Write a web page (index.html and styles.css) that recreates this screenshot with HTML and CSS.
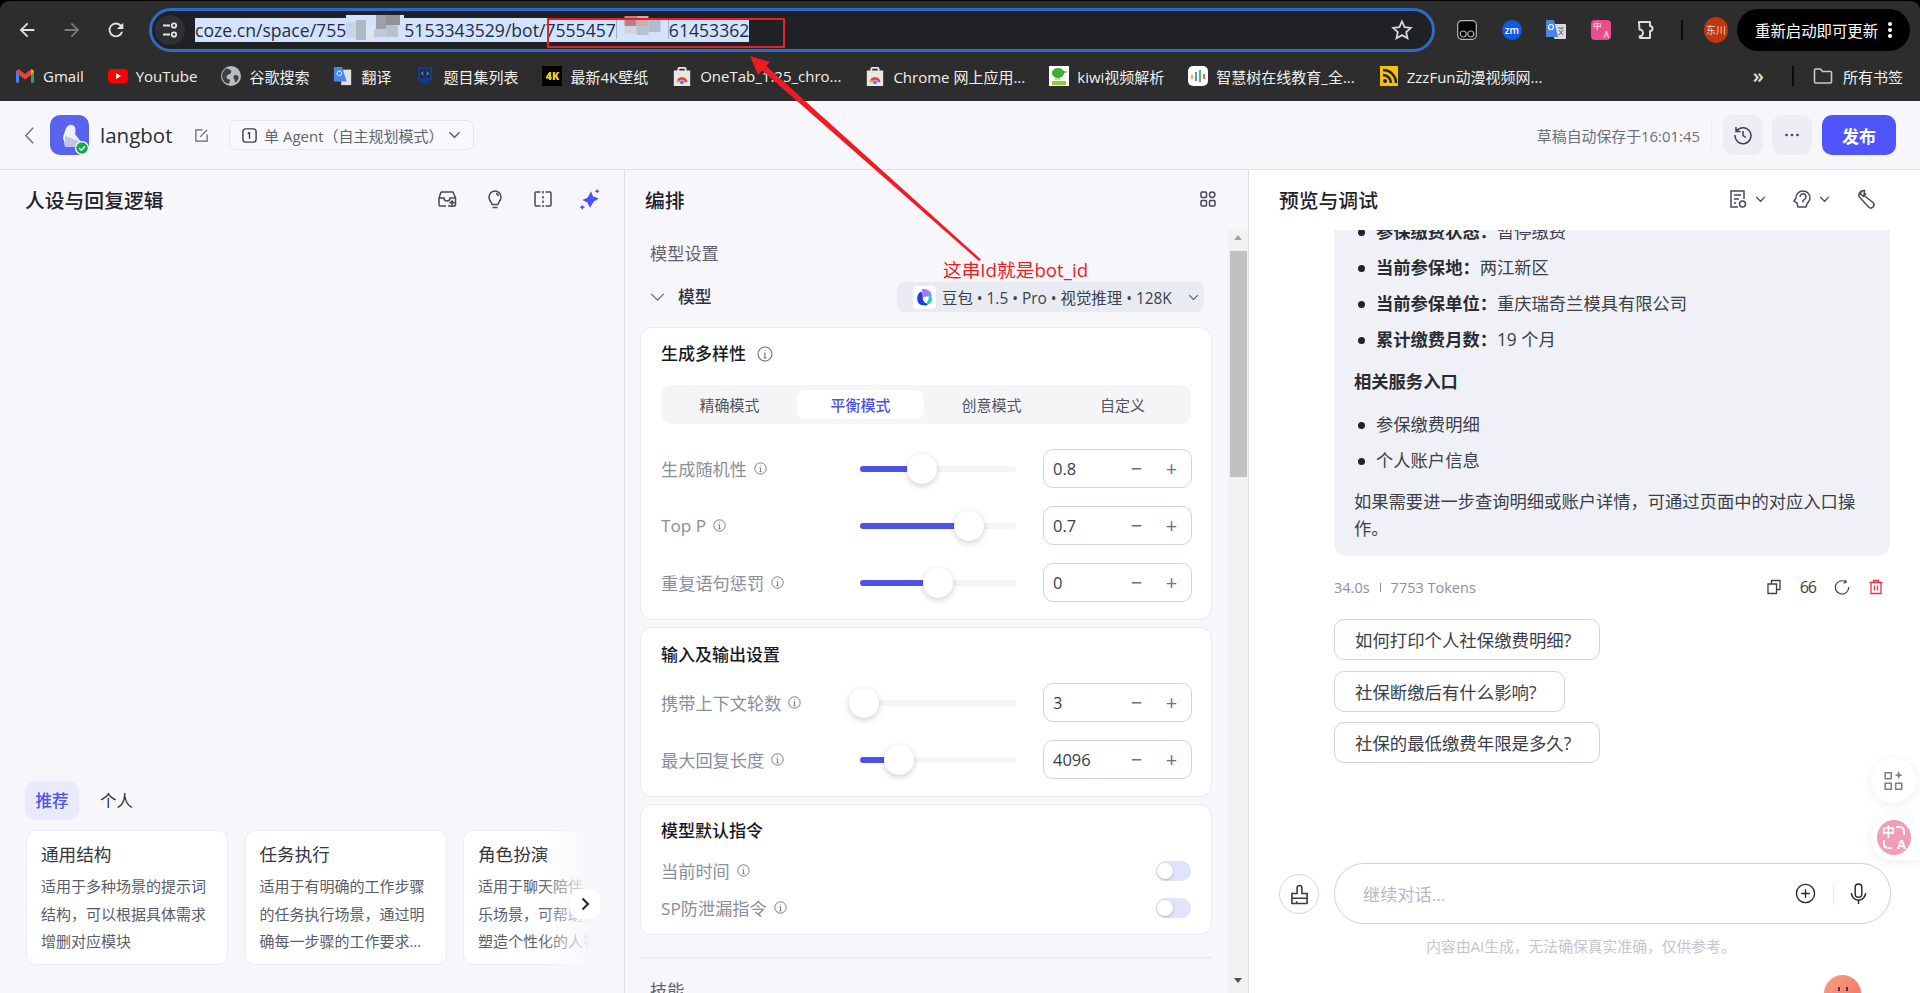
FILE: index.html
```html
<!DOCTYPE html>
<html lang="zh-CN">
<head>
<meta charset="utf-8">
<title>langbot</title>
<link rel="stylesheet" href="styles.css">
</head>
<body>
<div class="page">
  <header class="browser">
    <div class="toolbar">
      <div class="nav">
        <svg class="nav-icon" viewBox="0 0 24 24"><path d="M20 11H7.8l5.6-5.6L12 4l-8 8 8 8 1.4-1.4L7.8 13H20z"/></svg>
        <svg class="nav-icon off" viewBox="0 0 24 24"><path d="M4 11h12.2l-5.6-5.6L12 4l8 8-8 8-1.4-1.4 5.6-5.6H4z"/></svg>
        <svg class="nav-icon" viewBox="0 0 24 24"><path d="M17.7 6.3A8 8 0 1 0 19.7 14h-2.1a6 6 0 1 1-1.3-6.3L13 11h7V4z"/></svg>
      </div>
      <div class="omnibox">
        <span class="site-info"><svg viewBox="0 0 20 20"><path d="M3 5.5h7M3 14.5h7" class="tune"/><circle cx="14" cy="5.5" r="2.2" class="tune"/><circle cx="14" cy="14.5" r="2.2" class="tune"/></svg></span>
        <span class="url">coze.cn/space/755<span class="mosaic m1"><svg viewBox="0 0 58 27"><rect width="58" height="27" fill="#d3e3fd"/><rect x="0" y="7" width="10" height="16" fill="#c9d5e6"/><rect x="10" y="5" width="10" height="20" fill="#aeb8c6"/><rect x="20" y="10" width="8" height="17" fill="#dfe5ef"/><rect x="30" y="0" width="10" height="14" fill="#9da2a9"/><rect x="40" y="0" width="14" height="10" fill="#8f9297"/><rect x="28" y="14" width="12" height="8" fill="#c2cad6"/><rect x="40" y="10" width="12" height="12" fill="#b8c1ce"/></svg></span>5153343529/bot/7555457<span class="mosaic m2"><svg viewBox="0 0 52 24"><rect width="52" height="24" fill="#202124"/><rect y="4" width="52" height="20" fill="#d3e3fd"/><rect x="8" y="1" width="12" height="10" fill="#bb7f88"/><rect x="20" y="1" width="12" height="10" fill="#d8a8ae"/><rect x="32" y="3" width="12" height="14" fill="#aebccd"/><rect x="8" y="11" width="12" height="8" fill="#cfd6e2"/><rect x="20" y="11" width="12" height="9" fill="#b7c1cf"/></svg></span>61453362</span>
        <svg class="star" viewBox="0 0 24 24"><path d="M12 3.5l2.6 5.7 6.2.7-4.6 4.2 1.3 6.1L12 17.1l-5.5 3.1 1.3-6.1-4.6-4.2 6.2-.7z"/></svg>
      </div>
      <div class="extensions">
        <svg class="ext" viewBox="0 0 20 20"><rect x=".7" y=".7" width="18.6" height="18.6" rx="4" fill="#050505" stroke="#b9b9b9" stroke-width="1.2"/><circle cx="6.2" cy="14" r="3" fill="none" stroke="#aaa" stroke-width="1.2"/><circle cx="13.8" cy="14" r="3" fill="none" stroke="#aaa" stroke-width="1.2"/></svg>
        <span class="ext-zm">zm</span>
        <svg class="ext wide" viewBox="0 0 22 22"><rect x="9" y="5" width="12" height="15" rx="1" fill="#d9dde0"/><path d="M13 9h6M16 9v1.500M14 16l4-5M14 11l4 5" stroke="#666" fill="none"/><path d="M1 2a1 1 0 0 1 1-1h7l4 17H2a1 1 0 0 1-1-1z" fill="#4a86e8"/><circle cx="6" cy="8" r="2.500" fill="none" stroke="#fff" stroke-width="1.200"/></svg>
        <span class="ext-tr"><i>中</i><i>A</i></span>
        <svg class="ext" viewBox="0 0 20 20"><path d="M3 2h11v4a2 2 0 0 1 0 5v7H4l-.5-1.500a3 3 0 0 0 0-7z" fill="none" stroke="#dcdcdc" stroke-width="2" stroke-linejoin="round"/></svg>
        <span class="tool-sep"></span>
        <span class="avatar">东川</span>
      </div>
      <div class="update">重新启动即可更新<span class="dots"></span></div>
    </div>
    <nav class="bookmarks">
      <a class="bm b1"><svg viewBox="0 0 20 16"><path d="M1 3v11.500h3V7l6 4.500L16 7v7.500h3V3L16.500 1 10 6 3.500 1z" fill="#ea4335"/><path d="M1 3v11.500h3V7z" fill="#4285f4"/><path d="M16 7v7.500h3V3z" fill="#34a853"/><path d="M19 3l-2.500-2L16 7z" fill="#fbbc04"/></svg>Gmail</a>
      <a class="bm b2"><svg viewBox="0 0 20 14"><rect width="20" height="14" rx="3.500" fill="#f00"/><path d="M8 4l5 3-5 3z" fill="#fff"/></svg>YouTube</a>
      <a class="bm b3"><svg viewBox="0 0 18 18"><circle cx="9" cy="9" r="9" fill="#b9bcc0"/><path d="M5 2c3 1 5 2 4 4s-4 1-4 4 3 1 3 3-1 3-2 3c-3-1-5-4-5-7s2-6 4-7zM13 8c2 0 3 1 3 2s-1 4-3 5c-1-1 0-2-1-3s-1-4 1-4z" fill="#3c3f43"/></svg>谷歌搜索</a>
      <a class="bm b4"><svg viewBox="0 0 20 22"><rect x="8" y="4" width="11" height="17" fill="#dfe1e4"/><path d="M0 1h9l5 16H0z" fill="#4a86e8"/><circle cx="6" cy="8" r="2.500" fill="none" stroke="#fff"/></svg>翻译</a>
      <a class="bm b5"><svg viewBox="0 0 20 20"><path d="M3 1h14v13l-7 5-7-5z" fill="#0f3d86"/><path d="M5 3h10v9H5z" fill="#1f2d4d"/><path d="M8.500 6L6.500 7.500 8.500 9M11.500 6l2 1.500-2 1.500" stroke="#7fb2f0" fill="none"/></svg>题目集列表</a>
      <a class="bm b6"><span class="fourk">4K</span>最新4K壁纸</a>
      <a class="bm b7"><svg viewBox="0 0 20 22"><path d="M5 5V3a2 2 0 0 1 2-2h6a2 2 0 0 1 2 2v2h4v17H1V5zM7 5h6V3H7z" fill="#e8e8e8"/><path d="M4 18a6 6 0 0 1 12 0h-3a3 3 0 0 0-6 0z" fill="#ea4335"/><path d="M4 18a6 6 0 0 1 1-3l3 2-1 1z" fill="#fbbc04"/><circle cx="10" cy="18" r="2.200" fill="#4285f4"/></svg>OneTab_1.25_chro...</a>
      <a class="bm b8"><svg viewBox="0 0 20 22"><path d="M5 5V3a2 2 0 0 1 2-2h6a2 2 0 0 1 2 2v2h4v17H1V5zM7 5h6V3H7z" fill="#e8e8e8"/><path d="M4 18a6 6 0 0 1 12 0h-3a3 3 0 0 0-6 0z" fill="#ea4335"/><path d="M4 18a6 6 0 0 1 1-3l3 2-1 1z" fill="#fbbc04"/><circle cx="10" cy="18" r="2.200" fill="#4285f4"/></svg>Chrome 网上应用...</a>
      <a class="bm b9"><svg viewBox="0 0 20 20"><rect width="20" height="20" fill="#fff"/><ellipse cx="9" cy="7" rx="6" ry="5" fill="#3fae2a"/><path d="M14 5l5 1-5 1z" fill="#7a5a20"/><path d="M7 11v3M10 11v3" stroke="#3fae2a"/><rect x="3" y="15" width="14" height="4" fill="#8fce3a"/></svg>kiwi视频解析</a>
      <a class="bm b10"><svg viewBox="0 0 20 20"><rect width="20" height="20" rx="5" fill="#fff"/><path d="M4 9v4" stroke="#f2b134" stroke-width="2"/><path d="M8 6v9" stroke="#4a9de8" stroke-width="2"/><path d="M12 4v12" stroke="#55b56b" stroke-width="2"/><path d="M16 8v5" stroke="#e86a5a" stroke-width="2"/></svg>智慧树在线教育_全...</a>
      <a class="bm b11"><svg viewBox="0 0 18 20"><rect width="18" height="20" fill="#f4c20d"/><circle cx="5" cy="15" r="2" fill="#222"/><path d="M3 9a8 8 0 0 1 8 8M3 4a13 13 0 0 1 13 13" fill="none" stroke="#222" stroke-width="2.500"/></svg>ZzzFun动漫视频网...</a>
      <span class="bm-more">»</span>
      <span class="bm-sep"></span>
      <a class="bm bm-all"><svg viewBox="0 0 20 18"><path d="M1.500 3a1 1 0 0 1 1-1h5l2 2.500h8a1 1 0 0 1 1 1V15a1 1 0 0 1-1 1h-15a1 1 0 0 1-1-1z" fill="none" stroke="#c7c7c7" stroke-width="1.600"/></svg>所有书签</a>
    </nav>
  </header>

  <div class="topbar">
    <svg class="back" viewBox="0 0 12 20"><path d="M10 1.500L2 10l8 8.500" /></svg>
    <svg class="logo" viewBox="0 0 40 40"><rect width="39" height="40" rx="10" fill="#5a63ee"/><path d="M14 26c-2-3 0-7 1-10 1-4 4-7 7-6 4 1 4 5 3 9l6 8v5H15z" fill="#eef0fb"/><path d="M15 32V21l16 6v5z" fill="#bfc5ea"/><circle cx="32" cy="33" r="7" fill="#fff"/><circle cx="32" cy="33" r="5.800" fill="#12a74f"/><path d="M29 33l2.200 2.200 3.800-4" stroke="#fff" stroke-width="1.400" fill="none"/></svg>
    <span class="bot-name">langbot</span>
    <svg class="edit" viewBox="0 0 16 16"><path d="M9 2H2v12h12V7M6.500 9.500L14 2" /></svg>
    <div class="mode">
      <svg class="mode-icon" viewBox="0 0 18 18"><path d="M4 2h10M4 16h10M9 5.500v7M7.200 7L9 5.500M2 5v8a3 3 0 0 0 2 3M16 5v8a3 3 0 0 1-2 3M2 5a3 3 0 0 1 2-3M16 5a3 3 0 0 0-2-3"/></svg>
      <span>单 Agent（自主规划模式）</span>
      <svg class="chev" viewBox="0 0 14 8"><path d="M1.500 1l5.500 5.500L12.500 1"/></svg>
    </div>
    <div class="top-right">
      <span class="saved">草稿自动保存于16:01:45</span>
      <span class="top-sep"></span>
      <button class="square"><svg viewBox="0 0 20 20"><path d="M3.500 6A8 8 0 1 1 2 10M3 2v4.500h4.500M10 6v4.500l3 2"/></svg></button>
      <button class="square more"><svg viewBox="0 0 20 20"><circle cx="4.500" cy="10" r="1.300"/><circle cx="10" cy="10" r="1.300"/><circle cx="15.500" cy="10" r="1.300"/></svg></button>
      <button class="publish">发布</button>
    </div>
  </div>

  <main class="columns">
    <section class="col col-left">
      <div class="col-head">
        <h2>人设与回复逻辑</h2>
        <div class="head-icons left-icons">
          <svg viewBox="0 0 20 20"><path d="M4 3h12l2.500 6v7a1 1 0 0 1-1 1H11M2 16V9l2-6M1.500 9H7a3 3 0 0 0 6 0h5.500M2 16a1 1 0 0 0 1 1h6M15 18v-6M12.500 14.500L15 12l2.500 2.500"/></svg>
          <svg viewBox="0 0 20 20"><path d="M7 15.500c0-2-3-3.500-3-7.500a6 6 0 0 1 12 0c0 4-3 5.500-3 7.500zM7.500 18.500h5M11 4.500A4 4 0 0 1 13.500 7"/></svg>
          <svg viewBox="0 0 20 20"><path d="M7.500 3H3a1 1 0 0 0-1 1v12a1 1 0 0 0 1 1h4.500M12.500 3H17a1 1 0 0 1 1 1v12a1 1 0 0 1-1 1h-4.500M10 2v2.500M10 7v2.500M10 11.500V14M10 16v2"/></svg>
          <svg class="spark" viewBox="0 0 20 20"><path d="M11 3l1.600 4.400L18 9.500l-4.600 2.700L10 18l-2.400-4.800L3 11l4.800-2.200z"/><path d="M16.500 .5l.7 1.700 1.700.7-1.700.7-.7 1.700-.7-1.700-1.700-.7 1.700-.7zM3 15l.8 1.700 1.700.8-1.700.8L3 20l-.8-1.700-1.700-.8 1.700-.8z"/></svg>
        </div>
      </div>
      <div class="templates">
        <div class="tabs"><span class="tab on">推荐</span><span class="tab">个人</span></div>
        <div class="tpl-scroll">
          <article class="tpl"><h3>通用结构</h3><p>适用于多种场景的提示词结构，可以根据具体需求增删对应模块</p></article>
          <article class="tpl"><h3>任务执行</h3><p>适用于有明确的工作步骤的任务执行场景，通过明确每一步骤的工作要求…</p></article>
          <article class="tpl"><h3>角色扮演</h3><p>适用于聊天陪伴、互动娱乐场景，可帮助模型轻松塑造个性化的人物角色</p></article>
          <span class="tpl-fade"></span>
          <span class="tpl-next"><svg viewBox="0 0 12 16"><path d="M3.500 2.500L9 8l-5.500 5.500"/></svg></span>
        </div>
      </div>
    </section>

    <section class="col col-mid">
      <div class="col-head mid-head">
        <h2>编排</h2>
        <div class="head-icons"><svg class="grid-ic" viewBox="0 0 16 16"><rect x="1" y="1" width="5.500" height="5.500" rx="1"/><circle cx="12.200" cy="3.700" r="2.700"/><rect x="1" y="9.500" width="5.500" height="5.500" rx="1"/><rect x="9.500" y="9.500" width="5.500" height="5.500" rx="1"/></svg></div>
      </div>
      <div class="mid-body">
        <div class="mid-scroll">
          <div class="sec-label">模型设置</div>
          <div class="model-row">
            <svg class="model-chev" viewBox="0 0 16 9"><path d="M1 1l7 7 7-7"/></svg>
            <strong>模型</strong>
            <div class="model-pick">
              <span class="db-logo"><svg viewBox="0 0 18 18"><path d="M6 2c5-1 9 2 9 6l-8 1z" fill="#a67bf0"/><path d="M5 4C1 7 1 14 5 16c3 1 6 1 7-1-3 0-5-2-5-5 0-2 0-5-2-6z" fill="#1d3fe0"/><path d="M12 5c3 2 4 6 3 8s-3 3-5 2c2-2 3-6 2-10z" fill="#2ad1c0"/></svg></span>
              <span>豆包 • 1.5 • Pro • 视觉推理 • 128K</span>
              <svg class="chev small" viewBox="0 0 14 8"><path d="M1.500 1l5.500 5.500L12.500 1"/></svg>
            </div>
          </div>

          <div class="card card-div">
            <h4 class="card-title">生成多样性<svg class="info big" viewBox="0 0 16 16"><circle cx="8" cy="8" r="7"/><path d="M8 7v5M6.500 12h3M6.800 7H8M8 4v.8"/></svg></h4>
            <div class="segment"><span>精确模式</span><span class="on">平衡模式</span><span>创意模式</span><span>自定义</span></div>
            <div class="rows">
              <div class="param"><span class="plabel">生成随机性<svg class="info" viewBox="0 0 16 16"><circle cx="8" cy="8" r="7"/><path d="M8 7v5M6.500 12h3M6.800 7H8M8 4v.8"/></svg></span>
                <div class="slider" style="--v:62px"><i class="fill"></i><i class="thumb"></i></div>
                <div class="stepper"><span class="val">0.8</span><span class="op">−</span><span class="op">+</span></div></div>
              <div class="param"><span class="plabel">Top P<svg class="info" viewBox="0 0 16 16"><circle cx="8" cy="8" r="7"/><path d="M8 7v5M6.500 12h3M6.800 7H8M8 4v.8"/></svg></span>
                <div class="slider" style="--v:109px"><i class="fill"></i><i class="thumb"></i></div>
                <div class="stepper"><span class="val">0.7</span><span class="op">−</span><span class="op">+</span></div></div>
              <div class="param"><span class="plabel">重复语句惩罚<svg class="info" viewBox="0 0 16 16"><circle cx="8" cy="8" r="7"/><path d="M8 7v5M6.500 12h3M6.800 7H8M8 4v.8"/></svg></span>
                <div class="slider" style="--v:78px"><i class="fill"></i><i class="thumb"></i></div>
                <div class="stepper"><span class="val">0</span><span class="op">−</span><span class="op">+</span></div></div>
            </div>
          </div>

          <div class="card card-io">
            <h4 class="card-title">输入及输出设置</h4>
            <div class="rows">
              <div class="param"><span class="plabel">携带上下文轮数<svg class="info" viewBox="0 0 16 16"><circle cx="8" cy="8" r="7"/><path d="M8 7v5M6.500 12h3M6.800 7H8M8 4v.8"/></svg></span>
                <div class="slider" style="--v:4px"><i class="fill"></i><i class="thumb"></i></div>
                <div class="stepper"><span class="val">3</span><span class="op">−</span><span class="op">+</span></div></div>
              <div class="param"><span class="plabel">最大回复长度<svg class="info" viewBox="0 0 16 16"><circle cx="8" cy="8" r="7"/><path d="M8 7v5M6.500 12h3M6.800 7H8M8 4v.8"/></svg></span>
                <div class="slider" style="--v:39px"><i class="fill"></i><i class="thumb"></i></div>
                <div class="stepper"><span class="val">4096</span><span class="op">−</span><span class="op">+</span></div></div>
            </div>
          </div>

          <div class="card card-cmd">
            <h4 class="card-title">模型默认指令</h4>
            <div class="switch-row"><span class="plabel">当前时间<svg class="info" viewBox="0 0 16 16"><circle cx="8" cy="8" r="7"/><path d="M8 7v5M6.500 12h3M6.800 7H8M8 4v.8"/></svg></span><span class="toggle"></span></div>
            <div class="switch-row"><span class="plabel">SP防泄漏指令<svg class="info" viewBox="0 0 16 16"><circle cx="8" cy="8" r="7"/><path d="M8 7v5M6.500 12h3M6.800 7H8M8 4v.8"/></svg></span><span class="toggle"></span></div>
          </div>
          <hr class="mid-rule">
          <div class="sec-label skill">技能</div>
        </div>
        <div class="scrollbar"><span class="sb-up"></span><span class="sb-thumb"></span><span class="sb-space"></span><span class="sb-down"></span></div>
      </div>
    </section>

    <section class="col col-right">
      <div class="col-head right-head">
        <h2>预览与调试</h2>
        <div class="head-icons right-icons">
          <span class="ic-group"><svg viewBox="0 0 20 20"><path d="M10 18H3V2h13v8M6 6h7M6 10h5M6 14h2"/><circle cx="14.500" cy="15" r="3"/></svg><svg class="tiny" viewBox="0 0 12 8"><path d="M1 1l5 5 5-5"/></svg></span>
          <span class="ic-group"><svg viewBox="0 0 20 20"><path d="M6 18l-1-4-3-2 2-3c0-4 3-7 7-7s7 3 7 7c0 3-2 4-3 6l-1 3zM8 8a3 3 0 1 1 5 2l-2 1.500v2"/></svg><svg class="tiny" viewBox="0 0 12 8"><path d="M1 1l5 5 5-5"/></svg></span>
          <svg viewBox="0 0 20 20"><path d="M8.500 1.500A5 5 0 0 0 3 7.500L12.500 18a2.500 2.500 0 0 0 4.500-4.500L8 6.500zM6.500 1.500L4 4.500l3.500 3L10 4.500"/></svg>
        </div>
      </div>
      <div class="chat">
        <div class="bubble">
          <ul class="answer first">
            <li><b>参保缴费状态：</b>暂停缴费</li>
            <li><b>当前参保地：</b>两江新区</li>
            <li><b>当前参保单位：</b>重庆瑞奇兰模具有限公司</li>
            <li><b>累计缴费月数：</b>19 个月</li>
          </ul>
          <p class="ans-h">相关服务入口</p>
          <ul class="answer">
            <li>参保缴费明细</li>
            <li>个人账户信息</li>
          </ul>
          <p class="ans-p">如果需要进一步查询明细或账户详情，可通过页面中的对应入口操作。</p>
        </div>
        <div class="meta">
          <span>34.0s</span><span class="meta-bar"></span><span>7753 Tokens</span>
          <div class="meta-icons">
            <svg viewBox="0 0 16 16"><path d="M2 5h8.500v9.500H2zM5.500 5V1.500H14v9h-3.500"/></svg>
            <span class="quote">66</span>
            <svg viewBox="0 0 18 18"><path d="M13.500 3.500A7.500 7.500 0 1 0 16.500 9"/><path d="M13 1l.5 3-3 .5" /></svg>
            <svg class="trash" viewBox="0 0 16 16"><path d="M1.500 3.500h13M5.500 3.500V1.500h5v2M3 3.500V14.500h10V3.500M6.500 6.500v5M9.500 6.500v5"/></svg>
          </div>
        </div>
        <div class="suggest">
          <span>如何打印个人社保缴费明细?</span>
          <span>社保断缴后有什么影响?</span>
          <span>社保的最低缴费年限是多久?</span>
        </div>
      </div>
      <div class="composer">
        <span class="broom"><svg viewBox="0 0 20 22"><path d="M2 20.500V10h5.500V4a2.500 2.500 0 0 1 5 0v6H18v10.500zM2 15h16M7 20.500V18"/></svg></span>
        <div class="input">
          <span class="ph">继续对话...</span>
          <svg class="plus" viewBox="0 0 22 22"><circle cx="11" cy="11" r="9.500"/><path d="M11 6.500v9M6.500 11h9"/></svg>
          <span class="in-sep"></span>
          <svg class="mic" viewBox="0 0 20 24"><rect x="6.500" y="1.500" width="7" height="14" rx="3.500"/><path d="M2.500 11a7.500 7.500 0 0 0 15 0M10 18.500v4"/></svg>
        </div>
      </div>
      <p class="disclaimer">内容由AI生成，无法确保真实准确，仅供参考。</p>
      <div class="float-tools"><svg viewBox="0 0 20 20"><path d="M2 2.500h5.500V8H2zM2 12h5.500v5.500H2zM11.500 12H17v5.500h-5.500z"/><path class="solid" d="M14.300 1l1 2.700 2.700 1-2.700 1-1 2.700-1-2.700-2.700-1 2.700-1z"/></svg></div>
      <div class="float-trans"><span class="pink"><i>中</i><i>A</i></span></div>
      <span class="blob"><i></i><i></i></span>
    </section>
  </main>

  <div class="annot-rect"></div>
  <svg class="annot-arrow" viewBox="0 0 1920 993"><polygon points="750,56 770,62 766,65.800 981,259.500 979,261 762,70.200 758,75"/></svg>
  <span class="annot-text">这串Id就是bot_id</span>
</div>
</body>
</html>
```
FILE: styles.css
```css
* { box-sizing: border-box; }
html, body { margin: 0; height: 100%; }
body {
  font-family: "Open Sans", "Noto Sans CJK SC", sans-serif;
  color: #1f2229;
  background: #f7f7fb;
  overflow: hidden;
}
.page { position: relative; width: 1920px; height: 993px; display: flex; flex-direction: column; overflow: hidden; }
h2, h3, h4, p, ul { margin: 0; padding: 0; font-weight: 400; }
svg { display: block; flex: none; }

/* Browser chrome */
.browser { background: #000; flex: none; }
.toolbar {
  height: 55px; background: #2d2d2d; display: flex; align-items: center;
  border-radius: 9px 9px 0 0; margin-top: 1px; padding-top: 3px;
}
.nav { display: flex; align-items: center; gap: 22.500px; padding-left: 16px; width: 149px; flex: none; }
.nav-icon { width: 22px; height: 22px; fill: #e3e3e3; }
.nav-icon.off { fill: #7b7b7b; }
.omnibox {
  width: 1286px; height: 44px; border: 3px solid #2f6ac6; border-radius: 22px; background: #202124;
  display: flex; align-items: center; padding: 0 18px 0 2px;
}
.site-info { width: 30px; height: 30px; border-radius: 50%; background: #2f3033; display: flex; align-items: center; justify-content: center; margin-left: 1px; }
.site-info svg { width: 20px; height: 20px; }
.tune { fill: none; stroke: #e6e6e6; stroke-width: 1.8; }
.url {
  margin-left: 10px; background: #d3e3fd; color: #1f2e44; font-size: 17.6px; line-height: 24px; height: 24px;
  white-space: nowrap; display: inline-block;
}
.mosaic { display: inline-block; position: relative; height: 24px; vertical-align: top; }
.mosaic svg { position: absolute; top: -3px; left: 0; }
.m1 { width: 58px; }
.m1 svg { width: 58px; height: 27px; }
.m2 { width: 53px; }
.m2 svg { width: 53px; height: 24px; }
.star { margin-left: auto; width: 24px; height: 24px; fill: none; stroke: #d8d8d8; stroke-width: 1.800; }
.extensions { display: flex; align-items: center; width: 304px; padding-left: 22px; flex: none; }
.ext { width: 20px; height: 20px; margin-right: 25px; }
.ext.wide { width: 22px; height: 22px; margin-right: 24px; }
.ext-zm { width: 20px; height: 20px; margin-right: 23px; border-radius: 50%; background: #0f5be6; color: #fff; font-size: 10px; font-weight: 600; line-height: 20px; text-align: center; }
.ext-tr { width: 20px; height: 20px; margin-right: 25px; border-radius: 4px; background: #ea4d8c; color: #fff; display: flex; flex-direction: column; justify-content: center; padding: 0 2px; font-size: 8.500px; line-height: 9px; }
.ext-tr i, .pink i { font-style: normal; display: block; }
.ext-tr i:last-child, .pink i:last-child { align-self: flex-end; }
.tool-sep { width: 2px; height: 20px; background: #0c0c0c; margin-right: 21px; }
.avatar { width: 24px; height: 26px; border-radius: 50%; background: #c0360f; color: #f0d8c8; font-size: 10px; line-height: 26px; text-align: center; white-space: nowrap; }
.update {
  margin-left: -2px; width: 173px; height: 42px; background: #000; border-radius: 21px; color: #fff; font-size: 15.400px;
  display: flex; align-items: center; padding-left: 18px; position: relative;
}
.dots { position: absolute; right: 18px; top: 13px; width: 4px; height: 4px; border-radius: 50%; background: #fff; box-shadow: 0 6px 0 #fff, 0 12px 0 #fff; }
.bookmarks {
  height: 45px; background: #2d2d2d; display: flex; align-items: center; padding: 0 0 5px 15px; gap: 24px; color: #f0f0f0;
  font-size: 15px;
}
.bm { display: flex; align-items: center; gap: 8px; white-space: nowrap; }
.bm svg { width: 20px; height: 20px; }
.fourk { width: 20px; height: 20px; background: #000; color: #f5d020; font-size: 10.5px; font-weight: 800; line-height: 20px; text-align: center; }
.bm-more { margin-left: auto; margin-right: 8px; font-size: 20px; color: #e0e0e0; line-height: 1; font-weight: 600; }
.bm-sep { width: 2px; height: 20px; background: #0c0c0c; margin-left: -4px; }
.bm-all { margin-left: -5px; margin-right: 17px; gap: 10px; }

/* App top bar */
.topbar {
  height: 69px; flex: none; display: flex; align-items: center; background: #f7f7fb; border-bottom: 1px solid #dfdfe8; padding-left: 24px;
}
.back { width: 11px; height: 19px; fill: none; stroke: #6a6e7a; stroke-width: 1.500; }
.logo { width: 40px; height: 40px; margin-left: 15px; }
.bot-name { font-size: 20.500px; margin-left: 10px; color: #2a2d36; width: 72px; }
.edit { width: 15px; height: 15px; margin-left: 22px; fill: none; stroke: #5d616e; stroke-width: 1.300; }
.mode {
  margin-left: 20px; width: 245px; height: 30px; border: 1px solid #e6e6ee; border-radius: 7px; background: #f9f9fc; display: flex; align-items: center;
  padding-left: 11px; font-size: 15px; color: #60646f; white-space: nowrap;
}
.mode-icon { width: 17px; height: 17px; margin-right: 6px; fill: none; stroke: #3b3e49; stroke-width: 1.500; }
.chev { width: 13px; height: 8px; margin-left: auto; margin-right: 12px; fill: none; stroke: #555965; stroke-width: 1.400; }
.chev.small { width: 11px; height: 7px; margin-right: 5px; }
.top-right { margin-left: auto; display: flex; align-items: center; padding-right: 24px; }
.saved { font-size: 14.900px; color: #6c707c; }
.top-sep { width: 1px; height: 30px; background: #ececf2; margin: 0 11px 0 11px; }
.square { width: 40px; height: 40px; border: 0; border-radius: 10px; background: #ecedf5; display: flex; align-items: center; justify-content: center; padding: 0; margin-right: 9px; }
.square svg { width: 20px; height: 20px; fill: none; stroke: #3f424d; stroke-width: 1.500; }
.square.more svg { fill: #3f424d; stroke: none; }
.publish { width: 74px; height: 40px; border: 0; border-radius: 10px; background: #4f55fb; color: #fff; font: 700 17px "Open Sans", "Noto Sans CJK SC", sans-serif; padding: 0; margin-left: 1px; }

/* Columns */
.columns { flex: 1; min-height: 0; display: grid; grid-template-columns: 625px 624px 671px; }
.col { min-width: 0; min-height: 0; display: flex; flex-direction: column; border-right: 1px solid #dfdfe8; }
.col-head { height: 60px; flex: none; display: flex; align-items: center; padding: 0 26px 2px 25px; justify-content: space-between; }
.col-head h2 { font-size: 19.800px; font-weight: 500; color: #1f2229; }
.head-icons { display: flex; align-items: center; }
.head-icons svg { width: 20px; height: 20px; fill: none; stroke: #464a56; stroke-width: 1.500; }
.left-icons { gap: 28px; margin-right: -3px; }
.head-icons .spark { width: 22px; height: 22px; fill: #4d53f8; stroke: none; margin-left: -2px; }

/* Left */
.col-left { padding-bottom: 28px; }
.templates { margin-top: auto; padding-left: 25px; }
.tabs { display: flex; gap: 21px; margin-bottom: 10px; align-items: center; }
.tab { height: 39px; font-size: 16.500px; line-height: 39px; color: #2a2d36; }
.tab.on { width: 54px; background: #e9eafc; border-radius: 10px; color: #4d53e8; text-align: center; font-weight: 500; }
.tpl-scroll { display: flex; gap: 16.500px; width: 575px; overflow: hidden; position: relative; padding-left: 1px; height: 135px; }
.tpl { flex: none; width: 202px; height: 135px; background: #fff; border: 1px solid #ebebf2; border-radius: 10px; padding: 11px 14px 0; }
.tpl h3 { font-size: 17.600px; line-height: 24px; color: #33363f; }
.tpl p { margin-top: 7px; font-size: 15px; line-height: 27.500px; color: #5a5d68; height: 82.500px; overflow: hidden; }
.tpl-fade { position: absolute; right: 0; top: 0; bottom: 0; width: 60px; background: linear-gradient(90deg, rgba(247,247,251,0), #f7f7fb 85%); }
.tpl-next { position: absolute; right: 0; top: 59px; width: 30px; height: 30px; background: #fff; border-radius: 9px; display: flex; align-items: center; justify-content: center; }
.tpl-next svg { width: 12px; height: 16px; fill: none; stroke: #2a2d36; stroke-width: 2.200; }

/* Middle */
.mid-head { padding-left: 20px; padding-right: 32px; }
.grid-ic { width: 16px !important; height: 16px !important; }
.mid-body { flex: 1; min-height: 0; display: flex; }
.mid-scroll { flex: 1; min-width: 0; overflow: hidden; padding: 13px 16px 0 15px; }
.sec-label { font-size: 17.200px; line-height: 22px; color: #5f6370; padding-left: 10px; }
.model-row { height: 30px; margin: 17px 8px 15px 10px; display: flex; align-items: center; }
.model-chev { width: 15px; height: 8px; fill: none; stroke: #5f6370; stroke-width: 1.300; }
.model-row strong { font-size: 16.800px; font-weight: 500; margin-left: 13px; padding-bottom: 2px; color: #30333c; }
.model-pick {
  margin-left: auto; width: 307px; height: 30px; background: #e9ebf3; border-radius: 8px; display: flex; align-items: center; padding-left: 16px;
  font-size: 15.400px; color: #3c3f49; white-space: nowrap;
}
.db-logo { width: 23px; height: 23px; background: #fff; border-radius: 4px; display: flex; align-items: center; justify-content: center; margin-right: 6px; }
.db-logo svg { width: 20px; height: 20px; }
.card { background: #fff; border: 1px solid #e9e9f1; border-radius: 12px; padding: 14px 20px 17px; margin-bottom: 7px; }
.card-io { padding-top: 15px; }
.card-title { display: flex; align-items: center; font-size: 17px; line-height: 24px; font-weight: 500; color: #17191f; }
.info { width: 13px; height: 13px; margin-left: 7px; fill: none; stroke: #6c707c; stroke-width: 1.100; }
.info.big { width: 16px; height: 16px; margin-left: 11px; }
.segment { margin-top: 19px; height: 39px; background: #f5f5f8; border-radius: 10px; display: grid; grid-template-columns: repeat(4, 1fr); gap: 4px; padding: 5px; }
.segment span { display: flex; align-items: center; justify-content: center; font-size: 15px; color: #50545f; border-radius: 8px; }
.segment .on { background: #fff; color: #4d53e8; font-weight: 500; }
.rows { margin-top: 25px; display: flex; flex-direction: column; gap: 18px; }
.card-io .rows { margin-top: 16px; }
.param { display: grid; grid-template-columns: 199px 156px auto; width: 531px; align-items: center; height: 39px; }
.plabel { display: flex; align-items: center; font-size: 17.200px; color: #8a8e9b; white-space: nowrap; }
.slider { position: relative; height: 6px; background: #f5f5f7; border-radius: 3px; }
.fill { position: absolute; left: 0; top: 0; bottom: 0; width: var(--v); background: #4d53e8; border-radius: 3px; }
.thumb { position: absolute; left: var(--v); top: 50%; width: 30px; height: 30px; margin: -15px 0 0 -15px; background: #fff; border-radius: 50%; box-shadow: 0 2px 6px rgba(30,32,60,.22); }
.stepper { margin-left: 27px; width: 149px; height: 39px; border: 1px solid #cfd2e0; border-radius: 10px; display: flex; align-items: center; padding-left: 9px; color: #3a3d47; font-size: 16.500px; }
.val { flex: 1; }
.op { width: 35px; text-align: center; color: #6c707c; font-size: 20px; font-weight: 500; line-height: 1; }
.op:last-child { margin-right: 2px; }
.card-cmd { padding-bottom: 8px; }
.card-cmd .card-title { margin-bottom: 9px; }
.switch-row { height: 37px; display: flex; align-items: center; justify-content: space-between; }
.toggle { width: 35px; height: 20px; border-radius: 10px; background: #e1e3fb; position: relative; }
.toggle::before { content: ""; position: absolute; left: 1px; top: 2px; width: 16px; height: 16px; border-radius: 50%; background: #fff; box-shadow: 0 1px 3px rgba(30,32,60,.25); }
.mid-rule { border: 0; border-top: 1px solid #e4e5ee; margin: 22px 0 22px; }
.scrollbar { width: 20px; flex: none; background: #f1f1f1; display: flex; flex-direction: column; align-items: center; padding-top: 5px; }
.sb-up, .sb-down { width: 0; height: 0; border-left: 4.500px solid transparent; border-right: 4.500px solid transparent; }
.sb-up { border-bottom: 5px solid #a3a3a3; }
.sb-down { border-top: 5px solid #505050; margin-bottom: 10px; }
.sb-thumb { width: 17px; height: 226px; margin-top: 11px; background: #c1c1c1; }
.sb-space { flex: 1; }

/* Right */
.col-right { position: relative; background: #fff; border-right: 0; }
.right-head { padding-left: 30px; padding-right: 44px; }
.right-icons { gap: 26px; }
.ic-group { display: flex; align-items: center; gap: 7px; }
.tiny { width: 11px !important; height: 7px !important; }
.chat { height: 633px; flex: none; overflow: hidden; padding-left: 85px; padding-right: 30px; }
.bubble { background: #f0f1f6; border-radius: 0 0 12px 12px; padding: 0 20px 14px; font-size: 17.300px; line-height: 26.400px; color: #3b3e48; overflow: hidden; }
.answer { list-style: none; padding-left: 22px; }
.answer li { margin-bottom: 9.600px; position: relative; }
.answer li::before { content: ""; position: absolute; left: -18px; top: 10px; width: 7px; height: 7px; border-radius: 50%; background: #1f2229; }
.answer b { font-weight: 700; color: #2a2c34; }
.first li:first-child { margin-top: -11px; }
.ans-h { margin-top: 16px; font-weight: 700; color: #2a2c34; }
.ans-h + .answer { margin-top: 16px; }
.ans-p { margin-top: 15px; }
.meta { margin-top: 19px; height: 24px; display: flex; align-items: center; font-size: 14.500px; color: #8b8f9f; }
.meta-bar { width: 1px; height: 9px; background: #8b8f9f; margin: 0 10px; }
.meta-icons { margin-left: auto; display: flex; align-items: center; gap: 18px; padding-right: 6px; }
.meta-icons svg { width: 16px; height: 16px; fill: none; stroke: #3d404b; stroke-width: 1.300; }
.meta-icons .trash { stroke: #e8313f; }
.quote { font-size: 16px; color: #3d404b; letter-spacing: -1px; }
.suggest { margin-top: 20px; display: flex; flex-direction: column; gap: 10.500px; align-items: flex-start; }
.suggest span { height: 41px; border: 1px solid #cfd2e0; border-radius: 10px; display: flex; align-items: center; padding: 0 28px 0 20px; font-size: 17.400px; color: #3b3e48; background: #fff; }
.composer { display: flex; align-items: center; padding-left: 30px; gap: 15px; height: 61px; flex: none; }
.broom { width: 40px; height: 40px; border: 1px solid #d3d5e2; border-radius: 50%; display: flex; align-items: center; justify-content: center; margin-top: 1px; }
.broom svg { width: 19px; height: 21px; fill: none; stroke: #3b3e49; stroke-width: 1.700; }
.input { width: 557px; height: 61px; border: 1px solid #cdd0e0; border-radius: 30px; display: flex; align-items: center; padding-left: 28px; }
.ph { flex: 1; font-size: 17.200px; color: #b6b9c7; }
.plus { width: 21px; height: 21px; fill: none; stroke: #22252d; stroke-width: 1.400; }
.in-sep { width: 1px; height: 22px; background: #ececf2; margin: 0 15px 0 17px; }
.mic { width: 19px; height: 24px; margin-right: 22px; fill: none; stroke: #22252d; stroke-width: 1.500; }
.disclaimer { margin-top: 12px; text-align: center; font-size: 14.800px; line-height: 20px; color: #c3c5cf; width: 664px; }
.float-tools { position: absolute; right: 4px; top: 588px; width: 45px; height: 45px; border-radius: 50%; background: #fff; box-shadow: 0 2px 12px rgba(30,32,60,.08); display: flex; align-items: center; justify-content: center; }
.float-tools svg { width: 22px; height: 22px; fill: none; stroke: #7c7f88; stroke-width: 1.400; }
.float-tools .solid { fill: #7c7f88; stroke: none; }
.float-trans { position: absolute; right: 0; top: 645px; width: 49px; height: 45px; border-radius: 22px 0 0 22px; background: #fff; box-shadow: 0 2px 12px rgba(30,32,60,.08); display: flex; align-items: center; padding-left: 6px; }
.pink { position: relative; width: 34px; height: 35px; border-radius: 50%; background: #f29db5; color: #fff; font-size: 13px; font-weight: 700; line-height: 13px; display: flex; flex-direction: column; justify-content: center; padding: 0 5px; }
.pink::before, .pink::after { content: ""; position: absolute; width: 7px; height: 7px; border: 2px solid #fff; }
.pink::before { right: 6px; top: 6px; border-left: 0; border-bottom: 0; border-top-right-radius: 5px; }
.pink::after { left: 6px; bottom: 6px; border-right: 0; border-top: 0; border-bottom-left-radius: 5px; }
.blob { position: absolute; left: 575px; top: 805px; width: 37px; height: 37px; border-radius: 50%; background: linear-gradient(135deg, #f8a08a, #ec6f5e); display: flex; justify-content: center; gap: 6px; padding-top: 12px; }
.blob i { width: 2px; height: 4px; background: #6a2a20; }

/* Annotation overlay */
.annot-rect { position: absolute; left: 547px; top: 18px; width: 238px; height: 30px; border: 2px solid #e8202a; }
.annot-arrow { position: absolute; left: 0; top: 0; width: 1920px; height: 993px; pointer-events: none; }
.annot-arrow polygon { fill: #ee1c25; }
.annot-text { position: absolute; left: 943px; top: 256px; font-size: 18.700px; line-height: 27px; color: #ee1c25; white-space: nowrap; }
```
